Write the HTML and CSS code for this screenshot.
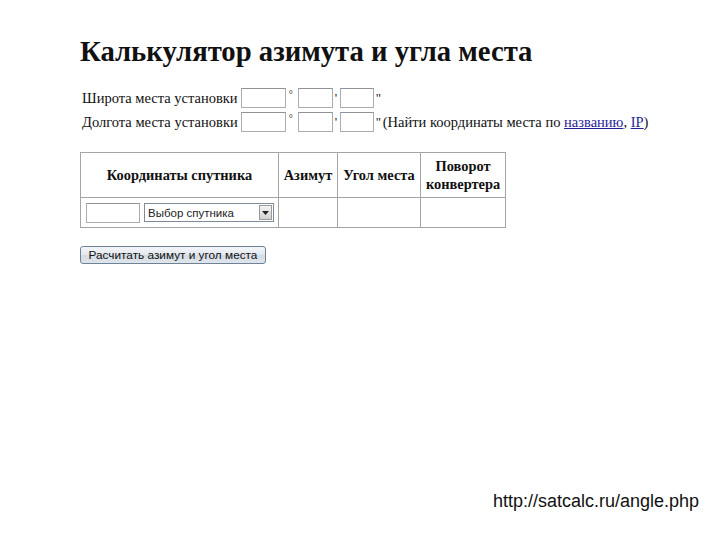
FILE: index.html
```html
<!DOCTYPE html>
<html lang="ru">
<head>
<meta charset="utf-8">
<title>Калькулятор азимута и угла места</title>
<link rel="stylesheet" href="styles.css">
</head>
<body>
<div class="page">
  <h1 class="title">Калькулятор азимута и угла места</h1>
  <div class="coords">
    <span class="label">Широта места установки</span>
    <div class="fields">
      <input class="inp deg" type="text"><span class="mark deg-mark">°</span>
      <input class="inp min" type="text"><span class="mark min-mark">'</span>
      <input class="inp sec" type="text"><span class="mark sec-mark">"</span>
    </div>
    <span class="label">Долгота места установки</span>
    <div class="fields">
      <input class="inp deg" type="text"><span class="mark deg-mark">°</span>
      <input class="inp min" type="text"><span class="mark min-mark">'</span>
      <input class="inp sec" type="text"><span class="mark sec-mark">"</span>
      <span class="find">(Найти координаты места по <a href="#">названию</a>, <a href="#">IP</a>)</span>
    </div>
  </div>
  <table class="sat">
    <tr class="head">
      <th class="c1">Координаты спутника</th>
      <th class="c2">Азимут</th>
      <th class="c3">Угол места</th>
      <th class="c4">Поворот<br>конвертера</th>
    </tr>
    <tr class="body">
      <td class="c1">
        <div class="pick">
          <input class="inp satpos" type="text">
          <div class="select"><span class="sel-text">Выбор спутника</span><span class="sel-btn"><svg width="7" height="4" viewBox="0 0 7 4"><path d="M0 0h7L3.5 4z" fill="#222"/></svg></span></div>
        </div>
      </td>
      <td></td>
      <td></td>
      <td></td>
    </tr>
  </table>
  <button class="calc" type="button">Расчитать азимут и угол места</button>
</div>
<div class="url">http://satcalc.ru/angle.php</div>
</body>
</html>
```

FILE: styles.css
```css
html, body {
  margin: 0;
  padding: 0;
  background: #fff;
}
body {
  width: 720px;
  height: 540px;
  position: relative;
  overflow: hidden;
  font-family: "Liberation Serif", "Times New Roman", serif;
  color: #111;
}
.page {
  padding: 33px 0 0 80px;
}
.title {
  margin: 0;
  font-size: 28.7px;
  font-weight: bold;
  line-height: 36px;
  color: #111;
}
.coords {
  margin-top: 19px;
  display: grid;
  grid-template-columns: auto auto;
  justify-content: start;
  column-gap: 3px;
  row-gap: 4px;
  font-size: 14.5px;
  padding-left: 2px;
}
.label {
  line-height: 20px;
  align-self: center;
}
.fields {
  display: flex;
  align-items: center;
  height: 20px;
}
.inp {
  box-sizing: border-box;
  height: 20px;
  margin: 0;
  padding: 0;
  border: 1px solid #a9adb3;
  border-top-color: #8f9399;
  background: #fff;
  font: 12px "Liberation Sans", Arial, sans-serif;
}
.deg { width: 45px; }
.min { width: 35px; }
.sec { width: 34px; }
.mark {
  font-size: 13px;
  line-height: 20px;
  align-self: flex-start;
  box-sizing: border-box;
  padding-left: 2px;
}
.deg-mark {
  font-size: 10px;
  line-height: 14px;
  width: 12px;
  padding-left: 3px;
}
.min-mark { width: 7px; }
.sec-mark { width: 9px; }
.find {
  font-size: 14.5px;
  line-height: 20px;
  white-space: nowrap;
}
.find a {
  color: #1f1f99;
  text-decoration: underline;
}
.sat {
  margin-top: 20px;
  border-collapse: collapse;
  border: 1px solid #c8c8c8;
}
.sat th, .sat td {
  border: 1px solid #a5a5a5;
  padding: 0;
}
.sat th {
  font-size: 14.4px;
  font-weight: bold;
  line-height: 18px;
  height: 44px;
  color: #111;
}
.sat td {
  height: 29px;
}
.c1 { width: 197px; }
.c2 { width: 58px; }
.c3 { width: 82px; }
.c4 { width: 84px; }
.pick {
  display: flex;
  align-items: center;
  gap: 4px;
  padding-left: 5px;
}
.satpos {
  width: 54px;
}
.select {
  box-sizing: border-box;
  width: 130px;
  height: 19px;
  border: 1px solid #7f8b99;
  display: flex;
  align-items: center;
  justify-content: space-between;
  background: #fff;
  font: 11.5px "Liberation Sans", Arial, sans-serif;
  color: #222;
}
.sel-text {
  padding-left: 3px;
}
.sel-btn {
  box-sizing: border-box;
  width: 13px;
  height: 15px;
  margin-right: 1px;
  border: 1px solid #9a9a9a;
  background: linear-gradient(#f4f4f4, #d2d2d2);
  display: flex;
  align-items: center;
  justify-content: center;
}
.calc {
  display: block;
  margin-top: 18px;
  box-sizing: border-box;
  width: 186px;
  height: 18px;
  padding: 0;
  border: 1px solid #6d8197;
  border-radius: 3px;
  background: linear-gradient(#f3f6f9 0%, #e3e8ee 50%, #d3dbe3 51%, #dfe5eb 100%);
  font: 11.8px "Liberation Sans", Arial, sans-serif;
  color: #111;
  line-height: 16px;
  white-space: nowrap;
}
.url {
  position: absolute;
  left: 493px;
  top: 491px;
  font: 18px "Liberation Sans", Arial, sans-serif;
  color: #111;
}
```
